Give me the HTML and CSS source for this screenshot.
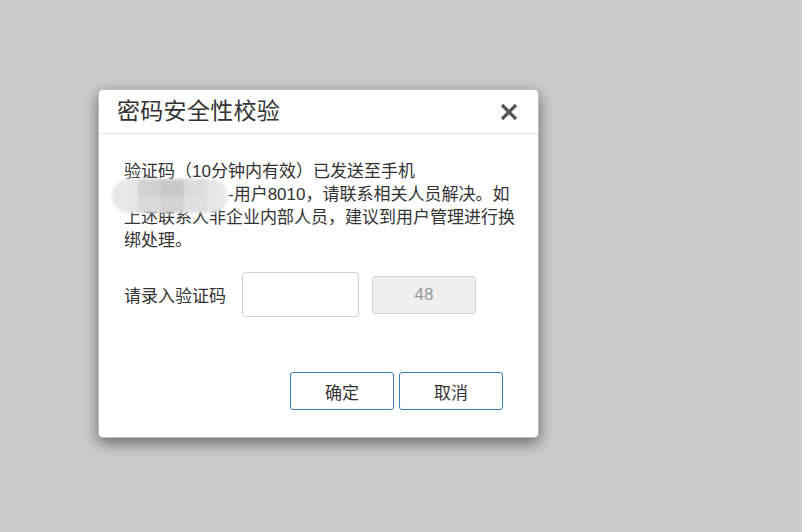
FILE: index.html
```html
<!DOCTYPE html>
<html lang="zh-CN">
<head>
<meta charset="utf-8">
<title>密码安全性校验</title>
<link rel="stylesheet" href="styles.css">
</head>
<body>
<div class="dialog">
  <div class="dialog-header">
    <span class="dialog-title">密码安全性校验</span>
    <button class="close" aria-label="关闭">
      <svg width="18" height="18" viewBox="0 0 18 18"><path d="M2 2 L16 16 M16 2 L2 16" stroke="#555" stroke-width="3.2" stroke-linecap="butt"/></svg>
    </button>
  </div>
  <div class="dialog-body">
    <p class="msg">验证码（10分钟内有效）已发送至手机<br><span class="phone"><span class="blur"></span></span>-用户8010，请联系相关人员解决。如上述联系人非企业内部人员，建议到用户管理进行换绑处理。</p>
    <div class="code-row">
      <label class="code-label">请录入验证码</label>
      <input class="code-input" type="text">
      <span class="code-timer">48</span>
    </div>
  </div>
  <div class="dialog-footer">
    <button class="btn">确定</button>
    <button class="btn">取消</button>
  </div>
</div>
</body>
</html>
```

FILE: styles.css
```css
html, body {
  margin: 0;
  padding: 0;
}
body {
  background: #cccccc;
  width: 802px;
  height: 532px;
  overflow: hidden;
  font-family: "Liberation Sans", "Noto Sans CJK SC", sans-serif;
  color: #333;
}
.dialog {
  margin: 89px 0 0 98px;
  width: 441px;
  height: 349px;
  box-sizing: border-box;
  background: #fff;
  border: 1px solid rgba(0, 0, 0, 0.25);
  border-radius: 5px;
  box-shadow: 0 5px 15px rgba(0, 0, 0, 0.5);
  display: flex;
  flex-direction: column;
}
.dialog-header {
  height: 43px;
  border-bottom: 1px solid #e5e5e5;
  display: flex;
  align-items: center;
  justify-content: space-between;
  padding: 0 20px 0 18px;
}
.dialog-title {
  font-size: 23px;
  line-height: 30px;
  color: #333;
  margin-top: -2px;
  letter-spacing: 0.3px;
}
.close {
  border: 0;
  background: none;
  padding: 0;
  width: 18px;
  height: 18px;
  display: flex;
}
.dialog-body {
  padding: 26px 17px 0 25px;
  flex: 1;
}
.msg {
  margin: 0;
  font-size: 17px;
  line-height: 23px;
  color: #333;
}
.phone {
  display: inline-block;
  width: 104px;
  height: 10px;
  position: relative;
}
.blur {
  position: absolute;
  left: -12px;
  top: -11px;
  width: 116px;
  height: 34px;
  border-radius: 17px;
  background:
    linear-gradient(180deg, rgba(255,255,255,0) 0%, rgba(255,255,255,0) 50%, rgba(230,230,230,0.35) 51%, rgba(230,230,230,0.35) 100%),
    linear-gradient(90deg, #e8e8e8 0%, #e8e8e8 22%, #d2d2d2 22%, #d2d2d2 42%, #c8c8c8 42%, #c8c8c8 62%, #dcdcdc 62%, #dcdcdc 82%, #e6e6e6 82%, #ececec 100%);
  filter: blur(1.5px);
}
.code-row {
  display: flex;
  align-items: center;
  margin-top: 20px;
}
.code-label {
  font-size: 17px;
  width: 118px;
}
.code-input {
  width: 117px;
  height: 45px;
  box-sizing: border-box;
  border: 1.5px solid #d2d2d2;
  border-radius: 4px;
  margin: 0;
  padding: 0 6px;
}
.code-timer {
  margin-left: 13px;
  width: 104px;
  height: 38px;
  box-sizing: border-box;
  background: #efefef;
  border: 1.5px solid #d4d4d4;
  border-radius: 3px;
  display: flex;
  align-items: center;
  justify-content: center;
  color: #999;
  font-size: 17px;
}
.dialog-footer {
  display: flex;
  justify-content: flex-end;
  gap: 5px;
  padding: 0 35px 27px 0;
}
.btn {
  width: 104px;
  height: 38px;
  box-sizing: border-box;
  background: #fff;
  border: 1.5px solid #3d7fb1;
  border-radius: 3px;
  font-family: "Liberation Sans", "Noto Sans CJK SC", sans-serif;
  font-size: 17px;
  color: #333;
  padding: 0;
}
```
